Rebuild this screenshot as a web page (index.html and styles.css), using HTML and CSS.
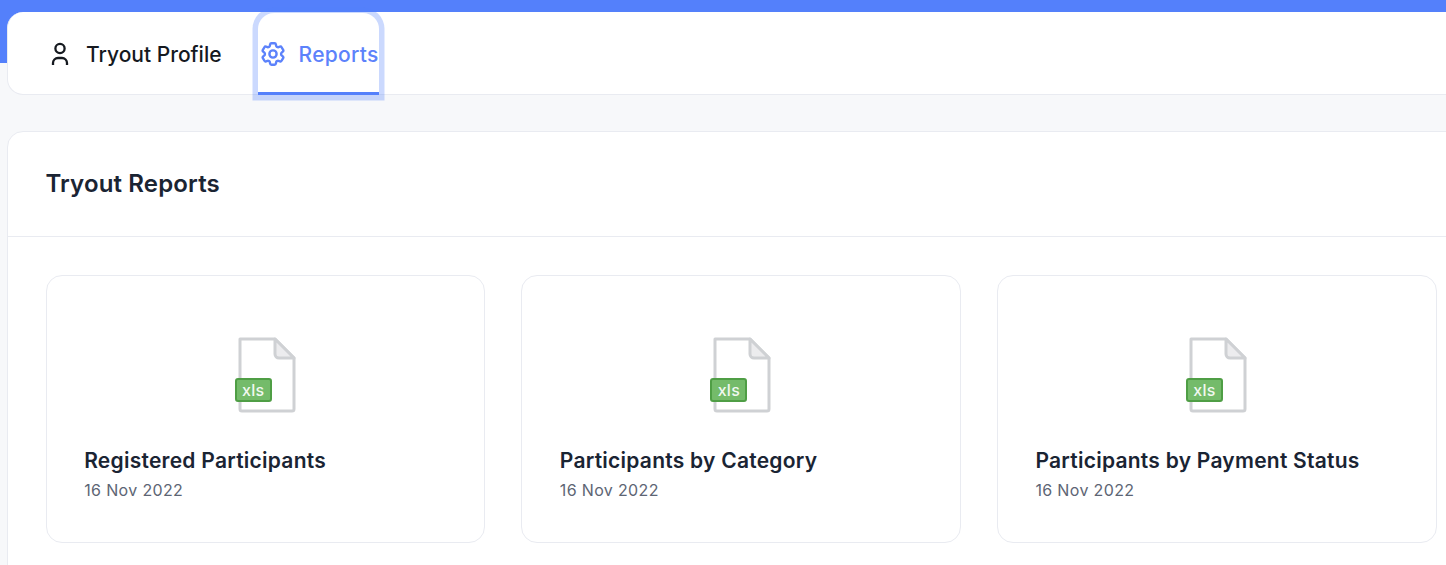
FILE: index.html
```html
<!DOCTYPE html>
<html lang="en">
<head>
<meta charset="utf-8">
<title>Tryout Reports</title>
<link rel="stylesheet" href="styles.css">
</head>
<body>
<div class="hero"></div>
<main class="page">
  <nav class="tabs">
    <a class="tab">
      <svg class="tab-icon" viewBox="0 0 24 24" fill="none" stroke="currentColor" stroke-width="2.3" stroke-linecap="butt" stroke-linejoin="round"><circle cx="12" cy="6.5" r="4.6"/><path d="M5 23v-2a5 5 0 0 1 5-5h4a5 5 0 0 1 5 5v2"/></svg>
      <span>Tryout Profile</span>
    </a>
    <a class="tab active">
      <svg class="tab-icon" viewBox="2 2 20 20" fill="none" stroke="currentColor" stroke-width="2" stroke-linecap="round" stroke-linejoin="round"><path d="M9.594 3.94c.09-.542.56-.94 1.11-.94h2.593c.55 0 1.02.398 1.11.94l.213 1.281c.063.374.313.686.645.87.074.04.147.083.22.127.324.196.72.257 1.075.124l1.217-.456a1.125 1.125 0 011.37.49l1.296 2.247a1.125 1.125 0 01-.26 1.431l-1.003.827c-.293.24-.438.613-.431.992a6.759 6.759 0 010 .255c-.007.378.138.75.43.99l1.005.828c.424.35.534.954.26 1.43l-1.298 2.247a1.125 1.125 0 01-1.369.491l-1.217-.456c-.355-.133-.75-.072-1.076.124a6.57 6.57 0 01-.22.128c-.331.183-.581.495-.644.869l-.213 1.28c-.09.543-.56.941-1.11.941h-2.594c-.55 0-1.02-.398-1.11-.94l-.213-1.281c-.062-.374-.312-.686-.644-.87a6.52 6.52 0 01-.22-.127c-.325-.196-.72-.257-1.076-.124l-1.217.456a1.125 1.125 0 01-1.369-.49l-1.297-2.247a1.125 1.125 0 01.26-1.431l1.004-.827c.292-.24.437-.613.43-.992a6.932 6.932 0 010-.255c.007-.378-.138-.75-.43-.99l-1.004-.828a1.125 1.125 0 01-.26-1.43l1.297-2.247a1.125 1.125 0 011.37-.491l1.216.456c.356.133.751.072 1.076-.124.072-.044.146-.087.22-.128.332-.183.582-.495.644-.869l.214-1.281z"/><circle cx="12" cy="12" r="3"/></svg>
      <span>Reports</span>
    </a>
  </nav>
  <section class="panel">
    <header class="panel-head"><h1>Tryout Reports</h1></header>
    <div class="grid">
      <article class="card">
        <div class="file"><svg class="file-svg" viewBox="0 0 62 76"><path class="sheet" d="M5 2h35l19 19v51a2 2 0 0 1-2 2H7a2 2 0 0 1-2-2z"/><path class="fold" d="M40 2v15a4 4 0 0 0 4 4h15z"/></svg><span class="badge">xls</span></div>
        <h2>Registered Participants</h2>
        <p>16 Nov 2022</p>
      </article>
      <article class="card">
        <div class="file"><svg class="file-svg" viewBox="0 0 62 76"><path class="sheet" d="M5 2h35l19 19v51a2 2 0 0 1-2 2H7a2 2 0 0 1-2-2z"/><path class="fold" d="M40 2v15a4 4 0 0 0 4 4h15z"/></svg><span class="badge">xls</span></div>
        <h2>Participants by Category</h2>
        <p>16 Nov 2022</p>
      </article>
      <article class="card">
        <div class="file"><svg class="file-svg" viewBox="0 0 62 76"><path class="sheet" d="M5 2h35l19 19v51a2 2 0 0 1-2 2H7a2 2 0 0 1-2-2z"/><path class="fold" d="M40 2v15a4 4 0 0 0 4 4h15z"/></svg><span class="badge">xls</span></div>
        <h2>Participants by Payment Status</h2>
        <p>16 Nov 2022</p>
      </article>
    </div>
  </section>
</main>
</body>
</html>
```
FILE: styles.css
```css
* { box-sizing: border-box; }
html, body { margin: 0; height: 100%; overflow: hidden; }
body { background: #f7f8fa; font-family: Inter, "Liberation Sans", sans-serif; color: #18212f; }
.hero { height: 63px; background: #5480fb; }
.page { margin: -51px -40px 0 7px; }
.tabs { display: flex; height: 83px; padding-left: 31px; gap: 36px; background: #fff; border: 1px solid #e9ebf1; border-top: 0; border-radius: 16px 0 0 16px; }
.tab { display: flex; align-items: center; gap: 14px; height: 83px; padding: 1px 0 0 9px; font-size: 21px; font-weight: 500; color: #15191f; white-space: nowrap; }
.tab-icon { width: 24px; height: 24px; flex: none; }
.tab.active { width: 121px; height: 82px; margin-top: 1px; padding: 3px 0 0 3px; letter-spacing: .3px; color: #5c82fb; border-bottom: 3px solid #5480fb; border-radius: 16px 16px 0 0; box-shadow: 0 0 0 5.5px rgba(84, 128, 251, .3); }
.panel { margin-top: 36px; background: #fff; border: 1px solid #e9ebf1; border-radius: 16px 0 0 0; height: 480px; }
.panel-head { height: 105px; padding: 0 0 2px 37.4px; display: flex; align-items: center; border-bottom: 1px solid #e9ebf1; }
.panel-head h1 { margin: 0; font-size: 24px; letter-spacing: .15px; font-weight: 600; color: #1a2433; }
.grid { display: grid; grid-template-columns: repeat(3, 439.6px); gap: 36px; padding: 38px 0 0 37.8px; }
.card { height: 268px; padding: 61px 37px 0 37.4px; background: #fff; border: 1px solid #e9ebf1; border-radius: 16px; }
.file { position: relative; width: 62px; height: 76px; margin: 0 auto 35px; }
.file-svg { display: block; width: 62px; height: 76px; }
.sheet { fill: #fff; stroke: #cfd1d4; stroke-width: 3; stroke-linejoin: round; }
.fold { fill: #ececee; stroke: #cfd1d4; stroke-width: 3; stroke-linejoin: round; }
.badge { position: absolute; left: 0; top: 41px; width: 37px; height: 24px; display: flex; align-items: center; justify-content: center; background: #74bb6a; border: 2px solid #4f9e45; border-radius: 3px; color: #f1f8f0; font-size: 16px; font-weight: 500; letter-spacing: .3px; }
.card h2 { margin: 0; font-size: 21px; letter-spacing: .25px; line-height: 26px; font-weight: 600; color: #1a2433; white-space: nowrap; }
.card p { margin: 5px 0 0; font-size: 16px; letter-spacing: .35px; line-height: 22px; color: #5d6574; }
```
